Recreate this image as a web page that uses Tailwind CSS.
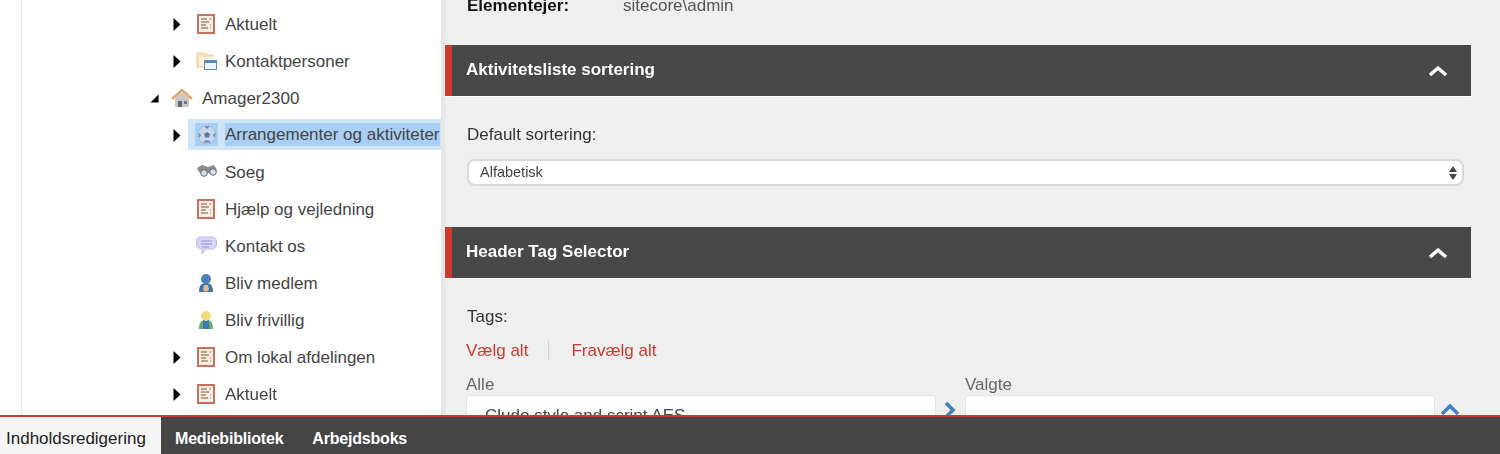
<!DOCTYPE html>
<html lang="en">
<head>
    <meta charset="UTF-8">
    <title>Indholdsredigering</title>
    <script src="https://cdn.jsdelivr.net/npm/@tailwindcss/browser@4"></script>
</head>
<body class="h-[454px] overflow-hidden font-['Liberation_Sans',Arial,sans-serif] bg-[#efefef] text-[#444]">
    <svg class="hidden">
        <symbol id="doc" viewBox="0 0 20 20">
            <rect x="1" y="0" width="18" height="20" fill="#c9705c"/>
            <rect x="3" y="2" width="14" height="16" fill="#f6eee4"/>
            <path d="M5 5h6M5 8h8M5 11h5M5 14h7" stroke="#a5886f" stroke-width="1.600"/>
            <path d="M13 5h2M14 11h1M14 14h1" stroke="#c9a58f" stroke-width="1.600"/>
        </symbol>
        <symbol id="arrow" viewBox="0 0 8 13">
            <path d="M0.500 0L7.500 6.500L0.500 13Z" fill="#000"/>
        </symbol>
    </svg>

    <div class="blur-[0.4px]">
    <div class="flex h-[415px] overflow-hidden">
        <!-- tree -->
        <div class="w-[441px] shrink-0 bg-white pl-[21px]">
            <div class="h-full border-l border-[#e8e8e8] pt-[6px] text-[17px] leading-[37px] whitespace-nowrap">
                <div class="flex h-[37px] items-center pl-[151px]">
                    <svg class="w-2 h-[13px] mr-[15px]"><use href="#arrow"/></svg>
                    <svg class="w-5 h-5 mr-[9px] -mt-[2px]"><use href="#doc"/></svg>
                    <span>Aktuelt</span>
                </div>
                <div class="flex h-[37px] items-center pl-[151px]">
                    <svg class="w-2 h-[13px] mr-[15px]"><use href="#arrow"/></svg>
                    <svg class="w-[22px] h-5 mr-[7px] -mt-[2px]" viewBox="0 0 22 20">
                        <path d="M1 2h7l2 2h7v12H1z" fill="#f7e3bb" stroke="#ecc98e"/>
                        <path d="M3 6h15v9H3z" fill="#fdf3dc"/>
                        <rect x="8.500" y="9.500" width="12" height="9" fill="#eef4fb" stroke="#5b89c4"/>
                        <rect x="8.500" y="9.500" width="12" height="2.500" fill="#5b89c4"/>
                    </svg>
                    <span>Kontaktpersoner</span>
                </div>
                <div class="flex h-[37px] items-center pl-[128px]">
                    <svg class="w-[9px] h-[9px] mr-[12px]" viewBox="0 0 10 10"><path d="M9.500 0.500V9.500H0.500Z" fill="#000"/></svg>
                    <svg class="w-[22px] h-5 mr-[9px] -mt-[2px]" viewBox="0 0 22 20">
                        <path d="M4 10v9h14v-9L11 4z" fill="#c9c9c9"/>
                        <path d="M1 11L11 2l10 9" fill="none" stroke="#e9a56f" stroke-width="2.400"/>
                        <rect x="7" y="13" width="4" height="6" fill="#666"/>
                        <rect x="13" y="13" width="3" height="3" fill="#777"/>
                    </svg>
                    <span>Amager2300</span>
                </div>
                <div class="flex h-[37px] items-center pl-[151px]">
                    <svg class="w-2 h-[13px] mr-[7px]"><use href="#arrow"/></svg>
                    <div class="-mt-[2px] flex items-center h-[31px] w-[253px] bg-[#cfe5f7] pl-[7px]">
                        <div class="w-[23px] h-[23px] bg-[#a9cff4] mr-[7px] flex items-center justify-center">
                            <svg class="w-5 h-5" viewBox="0 0 20 20">
                                <circle cx="10" cy="10" r="9" fill="#c8d9ec" stroke="#9fb6d2"/>
                                <path d="M10 7l3 2-1 3.500H8L7 9z" fill="#587aa3"/>
                                <path d="M7.500 1.500h5L10 4zM1.500 7.500L4 10l-1.500 3zM18.500 7.500L16 10l1.500 3zM6 17.500l2-2h4l2 2z" fill="#6585ab"/>
                            </svg>
                        </div>
                        <span class="bg-[#a9cff4] leading-[23px] h-[23px] w-[215px]">Arrangementer og aktiviteter</span>
                    </div>
                </div>
                <div class="flex h-[37px] items-center pl-[174px]">
                    <svg class="w-[22px] h-4 mr-[7px] -mt-[4px]" viewBox="0 0 22 16">
                        <path d="M1 5l5-3 6 2 6-2 3 5-3 4-6-1-4 3-5-4z" fill="#8c8c8c"/>
                        <circle cx="8" cy="10" r="3.300" fill="#cfe2f5" stroke="#666"/>
                        <circle cx="17" cy="9" r="3.300" fill="#cfe2f5" stroke="#666"/>
                    </svg>
                    <span>Soeg</span>
                </div>
                <div class="flex h-[37px] items-center pl-[174px]">
                    <svg class="w-5 h-5 mr-[9px] -mt-[2px]"><use href="#doc"/></svg>
                    <span>Hjælp og vejledning</span>
                </div>
                <div class="flex h-[37px] items-center pl-[174px]">
                    <svg class="w-[21px] h-5 mr-[8px] -mt-[2px]" viewBox="0 0 21 20">
                        <path d="M5 1h11c3 0 4.500 2 4.500 5v2c0 3-2 5-4.500 5h-6l-4 5 .5-5C3 13 .5 11 .5 8V6C.5 3 2 1 5 1z" fill="#d6d6fa" stroke="#bcbcec"/>
                        <path d="M5 5h11M5 8h11M6 11h7" stroke="#8f8fd6" stroke-width="1.200"/>
                    </svg>
                    <span>Kontakt os</span>
                </div>
                <div class="flex h-[37px] items-center pl-[174px]">
                    <svg class="w-5 h-5 mr-[9px] -mt-[2px]" viewBox="0 0 20 20">
                        <path d="M3 19c0-6 2-9 7-9s7 3 7 9z" fill="#3f73ad"/>
                        <circle cx="10" cy="6" r="5" fill="#4b80b8"/>
                        <path d="M8 12h4l1 5-3 2-3-2z" fill="#dfc38b"/>
                    </svg>
                    <span>Bliv medlem</span>
                </div>
                <div class="flex h-[37px] items-center pl-[174px]">
                    <svg class="w-5 h-5 mr-[9px] -mt-[2px]" viewBox="0 0 20 20">
                        <path d="M3 19c0-6 2-9 7-9s7 3 7 9z" fill="#5fae6a"/>
                        <path d="M7 10h6v9H7z" fill="#3f78b4"/>
                        <circle cx="10" cy="6" r="5" fill="#f3dc7a"/>
                    </svg>
                    <span>Bliv frivillig</span>
                </div>
                <div class="flex h-[37px] items-center pl-[151px]">
                    <svg class="w-2 h-[13px] mr-[15px]"><use href="#arrow"/></svg>
                    <svg class="w-5 h-5 mr-[9px] -mt-[2px]"><use href="#doc"/></svg>
                    <span>Om lokal afdelingen</span>
                </div>
                <div class="flex h-[37px] items-center pl-[151px]">
                    <svg class="w-2 h-[13px] mr-[15px]"><use href="#arrow"/></svg>
                    <svg class="w-5 h-5 mr-[9px] -mt-[2px]"><use href="#doc"/></svg>
                    <span>Aktuelt</span>
                </div>
            </div>
        </div>
        <div class="w-1 shrink-0 bg-[#e6e6e6]"></div>

        <!-- content -->
        <div class="w-[1026px] shrink-0 text-[17px]">
            <div class="-mt-[5px] flex h-[21px] items-center pl-[22px] leading-[21px]">
                <span class="w-[156px] font-bold text-[#111]">Elementejer:</span>
                <span class="text-[#555]">sitecore\admin</span>
            </div>
            <div class="mt-[29px] flex h-[51px] items-center justify-between border-l-[7px] border-[#cf3a2c] bg-[#484848] pl-[14px] pr-[23px] text-white shadow-[0_1px_0_#fff]">
                <span class="-mt-[2px] font-bold">Aktivitetsliste sortering</span>
                <svg class="w-[20px] h-3" viewBox="0 0 20 12"><path d="M2 10L10 3l8 7" fill="none" stroke="#fff" stroke-width="3.500"/></svg>
            </div>
            <div class="pl-[22px] pt-[28px] leading-[21px] text-[#333]">Default sortering:</div>
            <div class="ml-[22px] mr-[7px] mt-[14px] flex h-[27px] items-center justify-between rounded-lg border-2 border-[#d9d9d9] bg-white pl-[11px] pr-[4px] text-[14.5px] text-[#444]">
                <span>Alfabetisk</span>
                <svg class="w-[10px] h-4" viewBox="0 0 10 16"><path d="M5 1l4 6H1zM1 9h8l-4 6z" fill="#444"/></svg>
            </div>
            <div class="mt-[41px] flex h-[51px] items-center justify-between border-l-[7px] border-[#cf3a2c] bg-[#484848] pl-[14px] pr-[23px] text-white shadow-[0_1px_0_#fff]">
                <span class="-mt-[2px] font-bold">Header Tag Selector</span>
                <svg class="w-[20px] h-3" viewBox="0 0 20 12"><path d="M2 10L10 3l8 7" fill="none" stroke="#fff" stroke-width="3.500"/></svg>
            </div>
            <div class="pl-[22px] pt-[28px] leading-[21px] text-[#333]">Tags:</div>
            <div class="ml-[21px] mt-[13px] flex h-[21px] items-center leading-[21px] text-[#cf3a2c]">
                <span>Vælg alt</span>
                <span class="ml-[20px] mr-[22px] h-[19px] border-l border-[#d2d2d2]"></span>
                <span>Fravælg alt</span>
            </div>
            <div class="ml-[21px] mt-[13px] flex">
                <div class="w-[470px]">
                    <div class="leading-[21px] text-[#666]">Alle</div>
                    <div class="h-[40px] rounded-t-sm border border-[#e4e4e4] bg-white pl-[18px] pt-[10px] leading-[20px] text-[#444]">Cludo style and script AES</div>
                </div>
                <svg class="ml-[8px] mt-[27px] w-3 h-[18px]" viewBox="0 0 12 18"><path d="M2 2l7 7-7 7" fill="none" stroke="#3f7fc4" stroke-width="3.500"/></svg>
                <div class="ml-[9px] w-[470px]">
                    <div class="leading-[21px] text-[#666]">Valgte</div>
                    <div class="h-[40px] rounded-t-sm border border-[#e4e4e4] bg-white"></div>
                </div>
                <svg class="ml-[5px] mt-[28px] w-5 h-[14px]" viewBox="0 0 20 14"><path d="M2 12l8-8 8 8" fill="none" stroke="#3f7fc4" stroke-width="3.500"/></svg>
            </div>
        </div>
    </div>

    <!-- bottom tabs -->
    <div class="flex h-[39px] items-stretch border-t-2 border-[#cf3a2c] bg-[#454545] text-[17px]">
        <div class="flex w-[161px] items-center bg-[#f5f5f5] pl-[6px] pt-[6px] text-[#222]">Indholdsredigering</div>
        <div class="ml-[14px] flex items-center pt-[6px] text-[16px] font-bold tracking-[-0.2px] text-white">Mediebibliotek</div>
        <div class="ml-[29px] flex items-center pt-[6px] text-[16px] font-bold tracking-[-0.2px] text-white">Arbejdsboks</div>
    </div>
    </div>
</body>
</html>
